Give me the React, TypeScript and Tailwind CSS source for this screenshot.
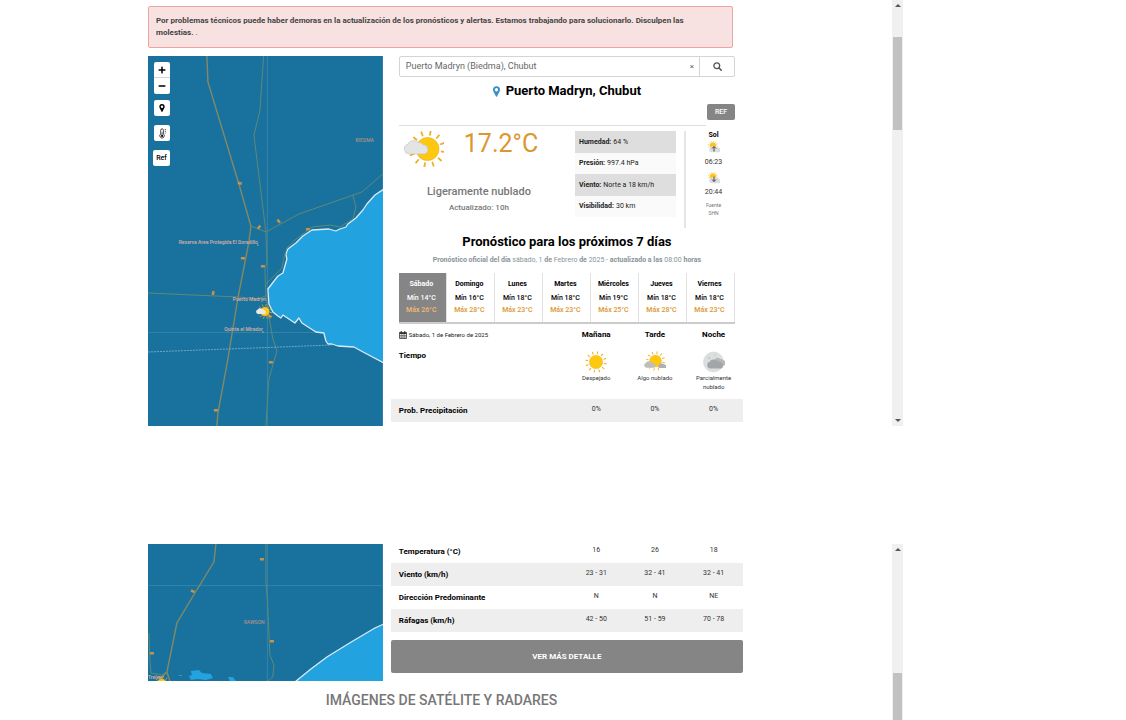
import React from "react";
import { FaMinus, FaPlus } from "react-icons/fa";

const RAYS = [0, 30, 60, 90, 120, 150, 180, 210, 240, 270, 300, 330];

const DAYS = [
  { name: "Sábado", min: 14, max: 26 },
  { name: "Domingo", min: 16, max: 28 },
  { name: "Lunes", min: 18, max: 23 },
  { name: "Martes", min: 18, max: 23 },
  { name: "Miércoles", min: 19, max: 25 },
  { name: "Jueves", min: 18, max: 28 },
  { name: "Viernes", min: 18, max: 23 },
];

const CONDITIONS = [
  { label: "Humedad:", value: "64 %" },
  { label: "Presión:", value: "997.4 hPa" },
  { label: "Viento:", value: "Norte a 18 km/h" },
  { label: "Visibilidad:", value: "30 km" },
];

const DETAILS = [
  { label: "Temperatura (°C)", values: ["16", "26", "18"] },
  { label: "Viento (km/h)", values: ["23 - 31", "32 - 41", "32 - 41"] },
  { label: "Dirección Predominante", values: ["N", "N", "NE"] },
  { label: "Ráfagas (km/h)", values: ["42 - 50", "51 - 59", "70 - 78"] },
];

const Sun = ({ cx, cy, r }: { cx: number; cy: number; r: number }) => (
  <g>
    {RAYS.map((deg) => (
      <line
        key={deg}
        x1={cx}
        y1={cy - r * 1.25}
        x2={cx}
        y2={cy - r * 1.55}
        stroke="#eeb02c"
        strokeWidth={r * 0.16}
        strokeLinecap="round"
        transform={`rotate(${deg + 10} ${cx} ${cy})`}
      />
    ))}
    <circle cx={cx} cy={cy} r={r} fill="#fdc80f" stroke="#eeb02c" strokeWidth={r * 0.06} />
  </g>
);

const CLOUD = "M5 14a5 5 0 0 1-1-9.8A6 6 0 0 1 14 2.6a4.500 4.500 0 0 1 5 2.200 4.700 4.700 0 0 1 1.500 9.200z";

const PartlyCloudy = ({ className }: { className: string }) => (
  <svg viewBox="0 0 40 36" className={className}>
    <Sun cx={23.500} cy={18} r={11.500} />
    <path d={CLOUD} transform="translate(0 9)" fill="#e4e4e4" stroke="#c4c4c4" strokeWidth="0.7" />
  </svg>
);

const ClearIcon = () => (
  <svg viewBox="0 0 22 22" className="mx-auto h-[22px] w-[22px]">
    <Sun cx={11} cy={11} r={6.700} />
  </svg>
);

const SomeCloudsIcon = () => (
  <svg viewBox="0 0 22 22" className="mx-auto h-[22px] w-[22px]">
    <Sun cx={11.500} cy={10} r={6} />
    <path d={CLOUD} transform="translate(0 10) scale(0.48)" fill="#bdbdbd" />
    <path d={CLOUD} transform="translate(14 12) scale(0.36)" fill="#b0b0b0" />
  </svg>
);

const NightCloudsIcon = () => (
  <svg viewBox="0 0 22 22" className="mx-auto h-[22px] w-[22px]">
    <circle cx="10.500" cy="11" r="10" fill="#dcdfdf" stroke="#cbcece" strokeWidth="0.5" />
    <circle cx="6" cy="7" r="1.500" fill="#cdd0d0" />
    <circle cx="12" cy="4" r="1" fill="#cdd0d0" />
    <path d={CLOUD} transform="translate(9 6.500) scale(0.58)" fill="#b4b6b8" />
    <path d={CLOUD} transform="translate(4 8) scale(0.68)" fill="#a3a6a9" />
  </svg>
);

const HorizonIcon = ({ down }: { down?: boolean }) => (
  <svg viewBox="0 0 12 12" className="mx-auto h-3 w-3">
    <Sun cx={5} cy={4.500} r={3} />
    <path d={CLOUD} transform="translate(1 4.500) scale(0.49)" fill="#dedede" />
    <path d={down ? "M6 4.500v5M4 7.500l2 2 2-2" : "M6 10.500v-5M4 7.500l2-2 2 2"} fill="none" stroke="#444" />
  </svg>
);

const ThermometerIcon = () => (
  <svg viewBox="0 0 10 12" className="h-[11px] w-[9px]">
    <path d="M3 6.500V2.300a1.500 1.500 0 0 1 3 0v4.200a2.500 2.500 0 1 1-3 0z" fill="none" stroke="#222" strokeWidth="0.9" />
    <circle cx="4.500" cy="8.600" r="1.300" fill="#111" />
    <path d="M4.500 4.500v4M7.500 1.500h1.500M7.500 3.500h1.500M7.500 5.500h1" stroke="#222" strokeWidth="0.8" />
  </svg>
);

const PinIcon = ({ className }: { className: string }) => (
  <svg viewBox="0 0 12 18" className={className} fill="currentColor" fillRule="evenodd">
    <path d="M6 0a6 6 0 0 1 6 6c0 1.500-.4 2.500-1 3.600L6.800 17.500a.9.9 0 0 1-1.600 0L1 9.600C.4 8.500 0 7.500 0 6a6 6 0 0 1 6-6zm0 3.200a2.800 2.800 0 1 0 0 5.600 2.800 2.800 0 0 0 0-5.600z" />
  </svg>
);

const SearchIcon = () => (
  <svg viewBox="0 0 18 18" className="h-[9px] w-[9px]" fill="none" stroke="#555">
    <circle cx="7.500" cy="7.500" r="5.800" strokeWidth="2.600" />
    <path d="M12 12l4.500 4.500" strokeWidth="3.200" strokeLinecap="round" />
  </svg>
);

const CalendarIcon = () => (
  <svg viewBox="0 0 16 16" className="h-2 w-2 shrink-0" fill="none" stroke="#333">
    <path d="M1 3h14v12H1z" strokeWidth="1.500" />
    <path d="M1 4.500h14" strokeWidth="3" />
    <path d="M4.500 0v4M11.500 0v4" strokeWidth="2.200" />
    <path d="M1 9h14M1 12h14M4.500 6v9M8 6v9M11.500 6v9" strokeWidth="1" />
  </svg>
);

// [x, y, rotation] of the route shields
const NORTH_SHIELDS = [[92, 127, 15], [111, 171, -50], [131, 165, 50], [160, 173, -10], [95, 202, 0], [115, 210, 0], [65, 237, -80], [122, 260, 30], [123, 306, 0], [68, 354, 0]];
const SOUTH_SHIELDS = [[45, 47, 25], [114, 15, 0], [124, 97, 0], [4, 109, 0]];

const Shields = ({ items }: { items: number[][] }) => (
  <g fill="#c8924c">
    {items.map(([x, y, deg]) => (
      <rect key={`${x}-${y}`} x={x - 2} y={y - 1} width="4" height="2.500" transform={`rotate(${deg} ${x} ${y})`} />
    ))}
  </g>
);

const NorthMap = () => (
  <svg viewBox="0 0 235 370" preserveAspectRatio="xMidYMid slice" className="block h-full w-full" role="img">
    <rect width="235" height="370" fill="#19729e" />
    <path d="M119.500 0V370M0 276.500H235" stroke="#3a87ab" strokeWidth="0.8" />
    <path
      d="M236 133L227 139 219 148 215 154 208 162 200 168 198 171 192 173 188 175 181 173 164 174 155 180 148 187 140 193 138 198 139 203 135 217 130 220 120 233 121 248 125 256 130 260 133 262 135 259 147 267 151 262 154 267 168 276 176 277 178 285 180 288 184 288 190 290 206 291 217 297 236 307z"
      fill="#23a2e0"
      stroke="#d8ebf5"
      strokeWidth="1.300"
      strokeLinejoin="round"
    />
    <g fill="none" stroke="#688a72" strokeWidth="0.9">
      <path d="M115.700 0L112 55 106 79 118 176 119 207 117 214 118 240 121 260 125 283 129 295 121 323 118 370" />
      <path d="M103 170L118 176 151 158 214 136 236 117M205 139L208 151 205 163 192 171 182 169 164 171 147 184 139 192 136 202 134 212 118 228" />
      <path d="M0 237L90 241 110 243 120 239" />
    </g>
    <path d="M59 0L60 26 91 128 103 170 101 186 90 242 80 303 70 357 69 370" fill="none" stroke="#828967" strokeWidth="1.400" />
    <path d="M0 296L80 293 184 289" fill="none" stroke="#8ec0d6" strokeWidth="0.7" strokeDasharray="2 1" />
    <Shields items={NORTH_SHIELDS} />
    <g fontSize="5" fontWeight="500" fill="#d9b0a4" textAnchor="end">
      <text x="110" y="188">Reserva Area Protegida El Doradillo</text>
      <text x="118" y="245">Puerto Madryn</text>
      <text x="115" y="275">Quinta el Mirador</text>
      <text x="226" y="86" fill="#a98f89">BIEDMA</text>
    </g>
    <circle cx="110" cy="189" r="0.7" fill="#d9b0a4" />
    <circle cx="115" cy="276" r="0.7" fill="#d9b0a4" />
    <Sun cx={117} cy={255.500} r={4.500} />
    <path d={CLOUD} transform="translate(108 252) scale(0.42)" fill="#e8e8e8" />
  </svg>
);

const SouthMap = () => (
  <svg viewBox="0 0 235 137" preserveAspectRatio="xMidYMid slice" className="block h-full w-full" role="img">
    <rect width="235" height="137" fill="#19729e" />
    <path d="M119.500 0V137M0 41.500H235" stroke="#3a87ab" strokeWidth="0.8" />
    <path d="M236 80L227 84 205 97 179 113 163 125 147 138H236z" fill="#23a2e0" stroke="#d8ebf5" strokeWidth="1.300" />
    <path d="M43 127l8-1 3 3 9 1 2 4-7 2-8-1-7 1-2-4 3-1zM80 133l5 0 3 4h-6zM31 131h3v1h-3z" fill="#23a2e0" />
    <g fill="none" stroke="#688a72" strokeWidth="0.9">
      <path d="M118 0V36L120 66 122 111 126 121 125 133 120 137M1 89L2 116 3 129 14 131 19 128" />
    </g>
    <path d="M68 0L66 18 47 49 29 79 19 128 22 137M19 128L10 137" fill="none" stroke="#828967" strokeWidth="1.400" />
    <Shields items={SOUTH_SHIELDS} />
    <text x="96" y="80" fontSize="5" fontWeight="500" fill="#a98f89">RAWSON</text>
    <text x="0" y="135" fontSize="5" fontWeight="500" fill="#d9b0a4">Trelew</text>
    <Sun cx={14} cy={140} r={5} />
  </svg>
);

const MapControls = () => {
  const box = "flex items-center justify-center rounded-xs bg-white text-black";
  return (
    <div className="absolute top-[6px] left-[5px] flex flex-col gap-[9px]">
      <div className="mx-px -mb-[3px] w-4 divide-y divide-gray-300 overflow-hidden rounded-xs">
        <button aria-label="Acercar" className="flex h-4 w-full items-center justify-center bg-white">
          <FaPlus className="h-2 w-2" />
        </button>
        <button aria-label="Alejar" className="flex h-4 w-full items-center justify-center bg-white">
          <FaMinus className="h-2 w-2" />
        </button>
      </div>
      <button aria-label="Ubicación" className={`${box} mx-px h-4 w-4`}>
        <PinIcon className="h-2 w-[6px]" />
      </button>
      <button aria-label="Temperatura" className={`${box} mx-px h-4 w-4`}>
        <ThermometerIcon />
      </button>
      <button className={`${box} h-4 w-[17px] text-[7px] font-medium`}>Ref</button>
    </div>
  );
};

const Scrollbar = ({ thumb, end }: { thumb: string; end?: boolean }) => (
  <div aria-hidden="true" className="flex w-[11px] shrink-0 flex-col items-center bg-[#f0f0f0]">
    <svg viewBox="0 0 6 3" className="mt-1 h-[3px] w-[6px] shrink-0"><path d="M0 3L3 0l3 3z" fill="#555" /></svg>
    <div className={`w-[9px] bg-[#c1c1c1] ${thumb}`} />
    {end && <svg viewBox="0 0 6 3" className="mt-auto mb-1 h-[3px] w-[6px]"><path d="M0 0h6L3 3z" fill="#555" /></svg>}
  </div>
);

const Columns = () => (
  <colgroup>
    <col className="w-1/2" />
    <col className="w-1/6" />
    <col className="w-1/6" />
    <col className="w-1/6" />
  </colgroup>
);

const DataRow = ({ label, values, shaded }: { label: string; values: string[]; shaded: boolean }) => (
  <tr className={shaded ? "h-[23px] bg-[#eee]" : "h-[23px]"}>
    <th scope="row" className="pl-2 text-left text-[8px] leading-3 font-bold text-black">{label}</th>
    {values.map((value, i) => (
      <td key={i} className="pb-1 text-center text-[7px] leading-3 text-[#333]">{value}</td>
    ))}
  </tr>
);

const CurrentWeather = () => (
  <div className="flex pt-[5px]">
    <div className="flex-1">
      <div className="flex h-[37px] items-start gap-5 pl-[5px]">
        <PartlyCloudy className="h-9 w-10" />
        <p className="text-[25px] leading-[25px] text-[#dc972f]">17.2°C</p>
      </div>
      <p className="mt-4 pr-4 text-center text-[11px] leading-4 font-medium text-[#777]">Ligeramente nublado</p>
      <p className="pr-4 text-center text-[8px] leading-4 font-medium text-[#777]">Actualizado: 10h</p>
    </div>
    <dl className="grid h-[86px] w-[101px] grid-rows-4 text-[7px] text-[#222]">
      {CONDITIONS.map(({ label, value }) => (
        <div key={label} className="flex items-center gap-[2px] bg-[#fafafa] pl-1 odd:bg-[#dedede]">
          <dt className="font-bold">{label}</dt>
          <dd>{value}</dd>
        </div>
      ))}
    </dl>
    <div className="ml-2 h-[97px] w-[2px] bg-[#e5e5e5]" />
    <div className="w-[49px] pl-[6px] text-center text-[7px] leading-2 text-[#333]">
      <p className="font-bold text-black">Sol</p>
      <div className="mt-[2px]"><HorizonIcon /></div>
      <p className="mt-[5px]">06:23</p>
      <div className="mt-[6px]"><HorizonIcon down /></div>
      <p className="mt-1">20:44</p>
      <p className="mt-[5px] text-[5px] text-[#777]">Fuente<br />SHN</p>
    </div>
  </div>
);

const DayTabs = () => (
  <div className="mt-2 grid grid-cols-7 border-b-2 border-[#ccc]">
    {DAYS.map(({ name, min, max }, i) => (
      <button
        key={name}
        className={`flex h-[49px] flex-col items-center border-r border-[#e2e2e2] pt-1 pr-[2px] text-[7px] leading-3 font-medium ${i === 0 ? "bg-[#858585] text-white" : "text-black"}`}
      >
        <span className="leading-[14px] font-bold">{name}</span>
        <span className="pt-px">Mín {min}°C</span>
        <span className={i === 0 ? "text-[#f3b873]" : "text-[#dc972f]"}>Máx {max}°C</span>
      </button>
    ))}
  </div>
);

const ForecastTable = () => {
  const sky = [
    { text: "Despejado", icon: <ClearIcon /> },
    { text: "Algo nublado", icon: <SomeCloudsIcon /> },
    { text: "Parcialmente nublado", icon: <NightCloudsIcon /> },
  ];

  return (
    <table className="w-full table-fixed border-collapse">
      <Columns />
      <thead>
        <tr className="h-[21px] text-[8px] leading-3 text-black">
          <th className="pl-2 text-left text-[6px] font-normal text-[#222]">
            <span className="flex items-center gap-[2px]">
              <CalendarIcon /> Sábado, 1 de Febrero de 2025
            </span>
          </th>
          <th scope="col" className="font-bold">Mañana</th>
          <th scope="col" className="font-bold">Tarde</th>
          <th scope="col" className="font-bold">Noche</th>
        </tr>
      </thead>
      <tbody>
        <tr className="h-[54px] align-top">
          <th scope="row" className="pt-[5px] pl-2 text-left text-[8px] leading-3 font-bold text-black">Tiempo</th>
          {sky.map(({ text, icon }) => (
            <td key={text} className="px-1 pt-[6px] text-center text-[6px] leading-[9px] text-[#333]">
              {icon}
              {text}
            </td>
          ))}
        </tr>
        <DataRow label="Prob. Precipitación" values={["0%", "0%", "0%"]} shaded />
      </tbody>
    </table>
  );
};

export default function App() {
  return (
    <main className="flex flex-col gap-[118px] bg-white pr-[223px] pl-[148px] font-['Roboto',sans-serif]">
      <section className="flex">
        <div className="min-w-0 flex-1 pt-[6px] pr-[149px]">
          <div role="alert" className="mr-[10px] rounded-xs border border-[#f0a3a0] bg-[#f8e2e1] py-2 pr-4 pl-[7px] text-[8px] leading-3 text-[#444]">
            <strong className="font-bold">
              Por problemas técnicos puede haber demoras en la actualización de los pronósticos y alertas. Estamos trabajando para solucionarlo. Disculpen las molestias.
            </strong>{" "}
            .
          </div>
          <div className="mt-2 flex gap-2">
            <div className="relative h-[370px] w-2/5 shrink overflow-hidden">
              <NorthMap />
              <MapControls />
            </div>
            <div className="w-3/5">
              <div className="px-2">
                <form className="flex h-[21px] rounded-xs border border-[#d4d4d4] text-[#666]">
                  <input
                    aria-label="Localidad"
                    defaultValue="Puerto Madryn (Biedma), Chubut"
                    className="min-w-0 flex-1 px-[6px] text-[9px] outline-none"
                  />
                  <button type="button" aria-label="Borrar" className="px-[5px] text-[8px]">×</button>
                  <button type="button" aria-label="Buscar" className="flex w-[35px] items-center justify-center border-l border-[#d4d4d4]">
                    <SearchIcon />
                  </button>
                </form>
                <h1 className="mt-[5px] flex items-center justify-center gap-[6px] text-[13px] leading-[18px] font-bold text-black">
                  <PinIcon className="h-[11px] w-[7px] text-[#3a8fc8]" />
                  Puerto Madryn, Chubut
                </h1>
                <div className="mt-1 flex justify-end">
                  <button className="h-4 w-7 rounded-xs bg-[#858585] text-[7px] font-medium text-white">REF</button>
                </div>
                <hr className="mt-[5px] mr-[29px] border-[#ddd]" />
                <CurrentWeather />
                <h2 className="mt-[5px] text-center text-[13px] leading-[18px] font-bold text-black">Pronóstico para los próximos 7 días</h2>
                <p className="mt-1 text-center text-[7px] leading-[10px] text-[#899399]">
                  <b>Pronóstico oficial del día</b> sábado, 1 <b>de</b> Febrero <b>de</b> 2025 - <b>actualizado a las</b> 08:00 <b>horas</b>
                </p>
                <DayTabs />
              </div>
              <ForecastTable />
            </div>
          </div>
        </div>
        <Scrollbar thumb="mt-[30px] h-[93px]" end />
      </section>

      <section className="flex">
        <div className="min-w-0 flex-1 pr-[149px]">
          <div className="flex gap-2">
            <div className="h-[137px] w-2/5 overflow-hidden">
              <SouthMap />
            </div>
            <div className="w-3/5">
              <table className="-mt-1 w-full table-fixed border-collapse">
                <Columns />
                <tbody>
                  {DETAILS.map((row, i) => (
                    <DataRow key={row.label} {...row} shaded={i % 2 === 1} />
                  ))}
                </tbody>
              </table>
              <button className="mt-2 h-[33px] w-full rounded-xs bg-[#858585] text-[8px] font-bold text-white">VER MÁS DETALLE</button>
            </div>
          </div>
          <h2 className="mt-[10px] mb-[11px] pr-2 text-center text-[14px] leading-[18px] font-medium text-[#777]">IMÁGENES DE SATÉLITE Y RADARES</h2>
        </div>
        <Scrollbar thumb="mt-[122px] flex-1" />
      </section>
    </main>
  );
}
